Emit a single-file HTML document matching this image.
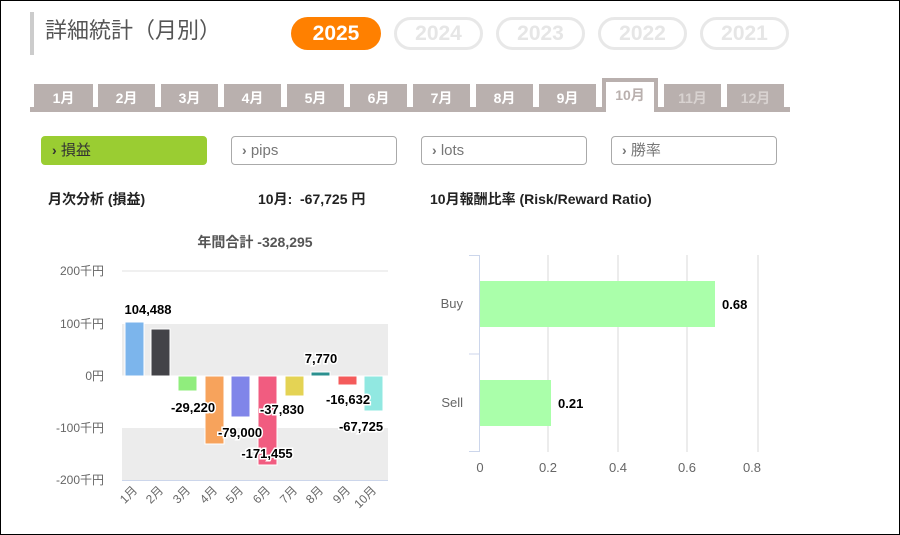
<!DOCTYPE html>
<html><head><meta charset="utf-8"><style>
*{margin:0;padding:0;box-sizing:border-box}
body{width:900px;height:535px;background:#fff;font-family:"Liberation Sans","Noto Sans CJK JP",sans-serif;position:relative;overflow:hidden}
.frame{position:absolute;left:0;top:0;width:900px;height:535px;border:1px solid #000}
.abs{position:absolute}
.bar{left:30px;top:12px;width:4px;height:43px;background:#ccc}
.title{left:45px;top:16px;font-size:22px;color:#555;line-height:30px}
.year{top:17px;height:33px;border-radius:17px;font-size:21px;font-weight:bold;text-align:center;line-height:33px}
.y0{background:#ff8000;color:#fff}
.yo{border:3px solid #e8e8e8;color:#e6e6e6;line-height:27px}
.tab{top:84px;height:26px;background:#b9b0ae;color:#fff;font-size:14px;font-weight:bold;text-align:center;line-height:28px}
.btn{top:136px;width:166px;height:29px;border:1px solid #aaa;border-radius:4px;font-size:15px;color:#777;line-height:27px;padding-left:10px}
.lbl{font-size:14px;font-weight:bold;color:#222}
</style></head><body>
<div class="frame"></div>
<div class="abs bar"></div>
<div class="abs title">詳細統計（月別）</div>
<div class="abs year y0" style="left:291px;width:90px">2025</div>
<div class="abs year yo" style="left:394px;width:89px">2024</div>
<div class="abs year yo" style="left:496px;width:89px">2023</div>
<div class="abs year yo" style="left:598px;width:89px">2022</div>
<div class="abs year yo" style="left:700px;width:89px">2021</div>

<div class="abs" style="left:30px;top:107px;width:760px;height:5px;background:#b9b0ae"></div>
<div class="abs tab" style="left:34px;width:59px">1月</div>
<div class="abs tab" style="left:98px;width:57px">2月</div>
<div class="abs tab" style="left:161px;width:57px">3月</div>
<div class="abs tab" style="left:224px;width:57px">4月</div>
<div class="abs tab" style="left:287px;width:57px">5月</div>
<div class="abs tab" style="left:350px;width:57px">6月</div>
<div class="abs tab" style="left:413px;width:57px">7月</div>
<div class="abs tab" style="left:476px;width:57px">8月</div>
<div class="abs tab" style="left:539px;width:57px">9月</div>
<div class="abs" style="left:602px;top:78px;width:56px;height:34px;background:#b9b0ae"></div>
<div class="abs" style="left:606px;top:82px;width:48px;height:30px;background:#fff;font-size:14px;font-weight:bold;color:#b9b0ae;text-align:center;line-height:26px">10月</div>
<div class="abs tab" style="left:664px;width:57px;color:#d8d2d0">11月</div>
<div class="abs tab" style="left:727px;width:57px;color:#d8d2d0">12月</div>

<div class="abs btn" style="left:41px;background:#9acd32;border-color:#9acd32;color:#333"><b style="font-size:14px">›</b> 損益</div>
<div class="abs btn" style="left:231px"><b style="font-size:14px">›</b> pips</div>
<div class="abs btn" style="left:421px"><b style="font-size:14px">›</b> lots</div>
<div class="abs btn" style="left:611px"><b style="font-size:14px">›</b> 勝率</div>

<div class="abs lbl" style="left:48px;top:189px">月次分析 (損益)</div>
<div class="abs lbl" style="left:258px;top:189px">10月:&nbsp; -67,725 円</div>
<div class="abs lbl" style="left:430px;top:189px">10月報酬比率 (Risk/Reward Ratio)</div>

<svg class="abs" style="left:0;top:0" width="900" height="535" font-family="Liberation Sans,Noto Sans CJK JP,sans-serif">
<text x="255" y="247" font-size="14" font-weight="bold" fill="#555" text-anchor="middle">年間合計 -328,295</text>
<rect x="122" y="324" width="266" height="52" fill="#ececec"/>
<rect x="122" y="428" width="266" height="52" fill="#ececec"/>
<line x1="122" y1="271" x2="388" y2="271" stroke="#e0e0e0"/>
<line x1="122" y1="376" x2="388" y2="376" stroke="#fff"/>
<line x1="122" y1="480.5" x2="388" y2="480.5" stroke="#ccd6eb"/>
<g font-size="12" fill="#666" text-anchor="end">
<text x="104" y="275">200千円</text><text x="104" y="328">100千円</text><text x="104" y="380">0円</text><text x="104" y="432">-100千円</text><text x="104" y="484">-200千円</text>
</g>
<g stroke="#fff" stroke-width="1">
<rect x="125" y="322" width="19" height="54" fill="#7cb5ec"/>
<rect x="151" y="329" width="19" height="47" fill="#434348"/>
<rect x="178" y="376" width="19" height="15" fill="#90ed7d"/>
<rect x="205" y="376" width="19" height="68" fill="#f7a35c"/>
<rect x="231" y="376" width="19" height="41" fill="#8085e9"/>
<rect x="258" y="376" width="19" height="89" fill="#f15c80"/>
<rect x="285" y="376" width="19" height="20" fill="#e4d354"/>
<rect x="311" y="372" width="19" height="4" fill="#2b908f"/>
<rect x="338" y="376" width="19" height="9" fill="#f45b5b"/>
<rect x="364" y="376" width="19" height="35" fill="#91e8e1"/>
</g>
<g font-size="13" font-weight="bold" fill="#000" stroke="#fff" stroke-width="3" paint-order="stroke" text-anchor="middle">
<text x="148" y="314">104,488</text>
<text x="193" y="412">-29,220</text>
<text x="240" y="437">-79,000</text>
<text x="267" y="458">-171,455</text>
<text x="282" y="414">-37,830</text>
<text x="321" y="363">7,770</text>
<text x="348" y="404">-16,632</text>
<text x="361" y="431">-67,725</text>
</g>
<g font-size="12" fill="#666" text-anchor="end">
<text transform="translate(138,491) rotate(-45)">1月</text>
<text transform="translate(164,491) rotate(-45)">2月</text>
<text transform="translate(191,491) rotate(-45)">3月</text>
<text transform="translate(218,491) rotate(-45)">4月</text>
<text transform="translate(244,491) rotate(-45)">5月</text>
<text transform="translate(271,491) rotate(-45)">6月</text>
<text transform="translate(298,491) rotate(-45)">7月</text>
<text transform="translate(324,491) rotate(-45)">8月</text>
<text transform="translate(351,491) rotate(-45)">9月</text>
<text transform="translate(377,491) rotate(-45)">10月</text>
</g>

<g stroke="#e6e6e6" stroke-width="1.5">
<line x1="548" y1="255" x2="548" y2="452"/><line x1="618" y1="255" x2="618" y2="452"/><line x1="687" y1="255" x2="687" y2="452"/><line x1="758" y1="255" x2="758" y2="452"/>
</g>
<path d="M469 255.5H479.5V451.5H469M469 354H479" stroke="#ccd6eb" fill="none"/>
<rect x="480" y="281" width="235" height="46" fill="#aaffaa"/>
<rect x="480" y="380" width="71" height="46" fill="#aaffaa"/>
<g font-size="13" fill="#666" text-anchor="end"><text x="463" y="308">Buy</text><text x="463" y="407">Sell</text></g>
<g font-size="13" font-weight="bold" fill="#000"><text x="722" y="309">0.68</text><text x="558" y="408">0.21</text></g>
<g font-size="13" fill="#666" text-anchor="middle">
<text x="480" y="472">0</text><text x="548" y="472">0.2</text><text x="618" y="472">0.4</text><text x="687" y="472">0.6</text><text x="752" y="472">0.8</text>
</g>
</svg>
</body></html>
